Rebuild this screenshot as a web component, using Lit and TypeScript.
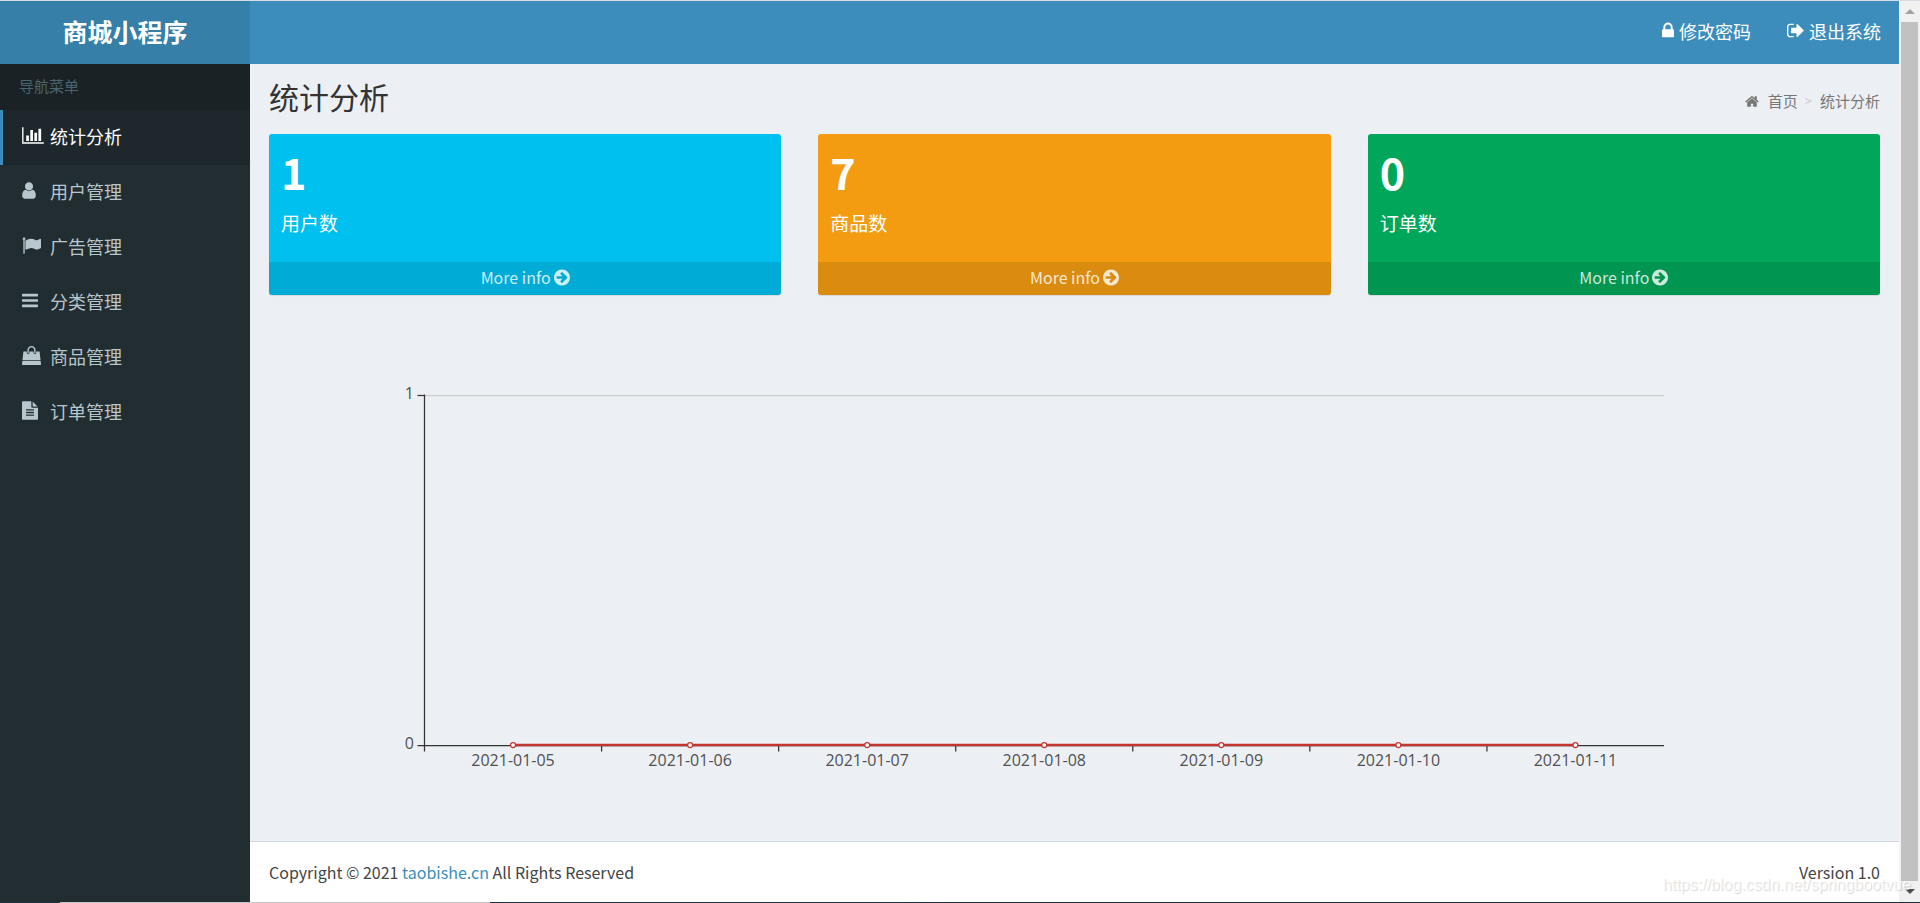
import { LitElement, html, css, svg } from "lit";
import { customElement, property } from "lit/decorators.js";

interface Glyph {
  x: number;
  w: number;
  d: string;
}

const bar = (y: number) =>
  `M1664 ${y}v128q0 26-19 45t-45 19h-1408q-26 0-45-19t-19-45v-128q0-26 19-45t45-19h1408q26 0 45 19t19 45z`;

/* Each glyph sits on a 1792-unit em; x and w give its horizontal extent. */
const GLYPHS: Record<string, Glyph> = {
  chart: {
    x: 0,
    w: 2048,
    d: "M640 896v512h-256v-512h256zm384-512v1024h-256v-1024h256zm1024 1152v128h-2048v-1536h128v1408h1920zm-640-896v768h-256v-768h256zm384-384v1152h-256v-1152h256z",
  },
  user: {
    x: 256,
    w: 1280,
    d: "M1536 1399q0 109-62.5 187t-150.5 78h-854q-88 0-150.5-78t-62.5-187q0-85 8.5-160.5t31.5-152 58.5-131 94-89 134.5-34.5q131 128 313 128t313-128q76 0 134.5 34.5t94 89 58.5 131 31.5 152 8.5 160.5zm-256-887q0 159-112.5 271.5t-271.5 112.5-271.5-112.5-112.5-271.5 112.5-271.5 271.5-112.5 271.5 112.5 112.5 271.5z",
  },
  flag: {
    x: 0,
    w: 1792,
    d: "M320 256q0 72-64 110v1266q0 13-9.5 22.5t-22.5 9.5h-64q-13 0-22.5-9.5t-9.5-22.5v-1266q-64-38-64-110 0-53 37.5-90.5t90.5-37.5 90.5 37.5 37.5 90.5zm1472 64v763q0 25-12.5 38.5t-39.5 27.5q-215 116-369 116-61 0-123.5-22t-108.5-48-115.5-48-142.5-22q-192 0-464 146-17 9-33 9-26 0-45-19t-19-45v-742q0-32 31-55 21-14 79-43 236-120 421-120 107 0 200 29t219 88q38 19 88 19 54 0 117.5-21t110-47 88-47 54.5-21q26 0 45 19t19 45z",
  },
  bars: { x: 128, w: 1536, d: bar(1344) + bar(832) + bar(320) },
  bag: {
    x: 0,
    w: 1792,
    d: "M1757 1408l35 313q3 28-16 50-19 21-48 21h-1664q-29 0-48-21-19-22-16-50l35-313h1722zm-93-839l86 775h-1708l86-775q3-24 21-40.5t43-16.5h256v128q0 53 37.5 90.5t90.5 37.5 90.5-37.5 37.5-90.5v-128h384v128q0 53 37.5 90.5t90.5 37.5 90.5-37.5 37.5-90.5v-128h256q25 0 43 16.5t21 40.5zm-384-185v256q0 26-19 45t-45 19-45-19-19-45v-256q0-106-75-181t-181-75-181 75-75 181v256q0 26-19 45t-45 19-45-19-19-45v-256q0-159 112.5-271.5t271.5-112.5 271.5 112.5 112.5 271.5z",
  },
  file: {
    x: 128,
    w: 1536,
    d: "M1596 476q14 14 28 36h-472v-472q22 14 36 28zm-476 164h544v1056q0 40-28 68t-68 28h-1344q-40 0-68-28t-28-68v-1600q0-40 28-68t68-28h800v544q0 40 28 68t68 28zm160 736v-64q0-14-9-23t-23-9h-704q-14 0-23 9t-9 23v64q0 14 9 23t23 9h704q14 0 23-9t9-23zm0-256v-64q0-14-9-23t-23-9h-704q-14 0-23 9t-9 23v64q0 14 9 23t23 9h704q14 0 23-9t9-23zm0-256v-64q0-14-9-23t-23-9h-704q-14 0-23 9t-9 23v64q0 14 9 23t23 9h704q14 0 23-9t9-23z",
  },
  lock: {
    x: 320,
    w: 1152,
    d: "M640 768h512v-192q0-106-75-181t-181-75-181 75-75 181v192zm832 96v576q0 40-28 68t-68 28h-960q-40 0-68-28t-28-68v-576q0-40 28-68t68-28h32v-192q0-184 132-316t316-132 316 132 132 316v192h32q40 0 68 28t28 68z",
  },
  signout: {
    x: 64,
    w: 1600,
    d: "M704 1440q0 4 1 20t.5 26.5-3 23.5-10 19.5-20.5 6.5h-320q-119 0-203.5-84.5t-84.5-203.5v-704q0-119 84.5-203.5t203.5-84.5h320q13 0 22.5 9.5t9.5 22.5q0 4 1 20t.5 26.5-3 23.5-10 19.5-20.5 6.5h-320q-66 0-113 47t-47 113v704q0 66 47 113t113 47h312l11.5 1 11.5 3 8 5.5 7 9 2 13.5zm928-544q0 26-19 45l-544 544q-19 19-45 19t-45-19-19-45v-288h-448q-26 0-45-19t-19-45v-384q0-26 19-45t45-19h448v-288q0-26 19-45t45-19 45 19l544 544q19 19 19 45z",
  },
  home: {
    x: 64,
    w: 1664,
    d: "M1472 992v480q0 26-19 45t-45 19h-384v-384h-256v384h-384q-26 0-45-19t-19-45v-480q0-1 .5-3t.5-3l575-474 575 474q1 2 1 6zm223-69l-62 74q-8 9-21 11h-3q-13 0-21-7l-692-577-692 577q-12 8-24 7-13-2-21-11l-62-74q-8-10-7-23.5t11-21.5l719-599q32-26 76-26t76 26l244 204v-195q0-14 9-23t23-9h192q14 0 23 9t9 23v408l219 182q10 8 11 21.5t-7 23.5z",
  },
  arrow: {
    x: 128,
    w: 1536,
    d: "M1413 896q0-27-18-45l-362-362-91-91q-18-18-45-18t-45 18l-91 91q-18 18-18 45t18 45l189 189h-502q-26 0-45 19t-19 45v128q0 26 19 45t45 19h502l-189 189q-18 18-18 45t18 45l91 91q18 18 45 18t45-18l91-91 362-362q18-18 18-45zm251 0q0 209-103 385.5t-279.5 279.5-385.5 103-385.5-103-279.5-279.5-103-385.5 103-385.5 279.5-279.5 385.5-103 385.5 103 279.5 279.5 103 385.5z",
  },
};

const icon = (name: string, size = 19) => {
  const g = GLYPHS[name];
  return html`<svg
    class="icon"
    aria-hidden="true"
    width=${Math.round((g.w / 1792) * size)}
    height=${size}
    viewBox="${g.x} 0 ${g.w} 1792"
  >
    <path d=${g.d}></path>
  </svg>`;
};

const MENU = [
  { icon: "chart", label: "统计分析" },
  { icon: "user", label: "用户管理" },
  { icon: "flag", label: "广告管理" },
  { icon: "bars", label: "分类管理" },
  { icon: "bag", label: "商品管理" },
  { icon: "file", label: "订单管理" },
];

const STATS = [
  { value: 1, label: "用户数", tone: "aqua" },
  { value: 7, label: "商品数", tone: "yellow" },
  { value: 0, label: "订单数", tone: "green" },
];

const SERIES = [
  { day: "2021-01-05", value: 0 },
  { day: "2021-01-06", value: 0 },
  { day: "2021-01-07", value: 0 },
  { day: "2021-01-08", value: 0 },
  { day: "2021-01-09", value: 0 },
  { day: "2021-01-10", value: 0 },
  { day: "2021-01-11", value: 0 },
];

@customElement("line-chart")
export class LineChart extends LitElement {
  @property({ attribute: false }) series: { day: string; value: number }[] = [];

  static styles = css`
    :host {
      display: block;
      max-width: 1550px;
    }
    .plot {
      display: block;
      width: 100%;
      height: auto;
    }
    .label {
      font: 16px "Open Sans", "Noto Sans", sans-serif;
      fill: #505050;
    }
    .end {
      text-anchor: end;
    }
    .middle {
      text-anchor: middle;
    }
    .axis {
      stroke: #333;
      stroke-width: 1.25;
    }
    .split {
      stroke: #ccc;
      stroke-width: 1.25;
    }
    .line {
      fill: none;
      stroke: #c23531;
      stroke-width: 2.5;
    }
    .dot {
      fill: #fff;
      stroke: #c23531;
      stroke-width: 1.25;
    }
  `;

  render() {
    const left = 155.5;
    const right = 1395;
    const top = 75.5;
    const bottom = 425.5;
    const step = (right - left) / this.series.length;
    const points = this.series.map((p, i) => ({
      x: left + step * (i + 0.5),
      y: bottom - p.value * (bottom - top),
      day: p.day,
    }));
    return html`<svg class="plot" viewBox="0 0 1550 500" role="img" aria-label="统计分析">
      <line class="split" x1=${left} y1=${top} x2=${right} y2=${top}></line>
      <line class="axis" x1=${left} y1=${top - 1} x2=${left} y2=${bottom + 6}></line>
      <line class="axis" x1=${left - 7} y1=${bottom} x2=${right} y2=${bottom}></line>
      <line class="axis" x1=${left - 7} y1=${top} x2=${left} y2=${top}></line>
      <text class="label end" x="145" y="79">1</text>
      <text class="label end" x="145" y="429">0</text>
      ${points.slice(1).map(
        (_, i) =>
          svg`<line class="axis" x1=${left + step * (i + 1)} y1=${bottom} x2=${left + step * (i + 1)} y2=${bottom + 6}></line>`
      )}
      ${points.map((p) => svg`<text class="label middle" x=${p.x} y="446">${p.day}</text>`)}
      <polyline class="line" points=${points.map((p) => `${p.x},${p.y - 0.5}`).join(" ")}></polyline>
      ${points.map((p) => svg`<circle class="dot" cx=${p.x} cy=${p.y - 0.5} r="2.5"></circle>`)}
    </svg>`;
  }
}

@customElement("app-root")
export class AppRoot extends LitElement {
  static styles = css`
    :host {
      display: grid;
      grid-template-columns: minmax(0, 1fr) 21px;
      grid-template-rows: minmax(0, 1fr) 1px;
      position: relative;
      box-sizing: border-box;
      min-height: 100vh;
      border-top: 1px solid #d9dce2;
      background: #ecf0f5;
      color: #333;
      font: 16px/24px "Noto Sans CJK SC", sans-serif;
    }
    * {
      box-sizing: border-box;
    }
    a {
      color: inherit;
      text-decoration: none;
    }
    h1,
    p,
    ul,
    ol {
      margin: 0;
      padding: 0;
      list-style: none;
    }
    .icon {
      display: block;
      flex: none;
      fill: currentColor;
    }
    .app {
      display: grid;
      grid-template: 63px minmax(0, 1fr) / 250px minmax(0, 1fr);
    }
    .brand {
      display: grid;
      place-items: center;
      padding-bottom: 4px;
      background: #367fa9;
      color: #fff;
      font-size: 25px;
      line-height: 36px;
      font-weight: 700;
    }
    .topbar {
      display: flex;
      align-items: center;
      justify-content: flex-end;
      gap: 36px;
      padding: 0 18px 4px;
      background: #3c8dbc;
      color: #fff;
      font-size: 18px;
    }
    .action {
      display: flex;
      align-items: center;
      gap: 5px;
    }
    .sidebar {
      background: #222d32;
      color: #b8c7ce;
      font-size: 18px;
    }
    .caption {
      padding: 10px 19px 12px;
      background: #1a2226;
      color: #4b646f;
      font-size: 15px;
    }
    .item {
      display: flex;
      align-items: center;
      height: 55px;
      padding: 0 0 4px 19px;
      border-left: 3px solid transparent;
    }
    .item .slot {
      width: 28px;
    }
    .item.active {
      border-color: #3c8dbc;
      background: #1e282c;
      color: #fff;
    }
    .page {
      display: flex;
      flex-direction: column;
      min-width: 0;
    }
    .content {
      flex: 1;
      padding: 12px 19px 20px;
    }
    .heading {
      display: flex;
      justify-content: space-between;
      margin-bottom: 18px;
    }
    .heading h1 {
      font-size: 30px;
      line-height: 40px;
      font-weight: 400;
    }
    .crumbs {
      display: flex;
      align-items: center;
      padding-top: 10px;
      color: #777;
      font-size: 15px;
    }
    .crumbs a {
      display: flex;
      align-items: center;
      gap: 9px;
    }
    .sep {
      padding: 0 8px 0 7px;
      color: #ccc;
      font-size: 13px;
    }
    .stats {
      display: grid;
      grid-template-columns: repeat(3, minmax(0, 1fr));
      gap: 37px;
      margin-bottom: 25px;
    }
    .card {
      border-radius: 3px;
      overflow: hidden;
      color: #fff;
      box-shadow: 0 1px 1px rgba(0, 0, 0, 0.1);
    }
    .aqua {
      background: #00c0ef;
    }
    .yellow {
      background: #f39c12;
    }
    .green {
      background: #00a65a;
    }
    .body {
      height: 128px;
      padding: 10px 12px;
    }
    .value {
      font-size: 43px;
      line-height: 54px;
      font-weight: 700;
    }
    .name {
      padding-top: 11px;
      font-size: 19px;
      line-height: 28px;
    }
    .more {
      display: flex;
      align-items: center;
      justify-content: center;
      gap: 3px;
      height: 33px;
      padding-bottom: 3px;
      background: rgba(0, 0, 0, 0.1);
      color: rgba(255, 255, 255, 0.8);
    }
    .footer {
      display: flex;
      align-items: center;
      justify-content: space-between;
      height: 61px;
      padding: 0 19px;
      border-top: 1px solid #d2d6de;
      background: #fff;
      color: #444;
    }
    .footer a {
      color: #3c8dbc;
    }
    .scroll {
      display: grid;
      grid-template-rows: 21px minmax(0, 1fr) 21px;
      justify-items: center;
      align-items: center;
      background: #f1f1f1;
    }
    .thumb {
      width: 17px;
      height: 100%;
      background: #c1c1c1;
    }
    .edge {
      grid-column: 1 / -1;
      background: linear-gradient(90deg, #1d3540 60px, #c4c6c8 60px 490px, #1d3540 490px 900px, #1b2a4a 950px);
    }
    .up {
      fill: #a3a3a3;
    }
    .down {
      fill: #505050;
    }
    .watermark {
      position: absolute;
      right: 9px;
      bottom: 7px;
      color: rgba(255, 255, 255, 0.75);
      font: 16px/22px "Liberation Sans", sans-serif;
      text-shadow: 1px 1px 1px rgba(0, 0, 0, 0.16);
      pointer-events: none;
    }
  `;

  render() {
    return html`
      <div class="app">
        <a class="brand" href="#">商城小程序</a>
        <header class="topbar">
          <a class="action" href="#">${icon("lock")}修改密码</a>
          <a class="action" href="#">${icon("signout")}退出系统</a>
        </header>
        <nav class="sidebar">
          <p class="caption">导航菜单</p>
          <ul>
            ${MENU.map(
              (m, i) => html`<li>
                <a class="item ${i === 0 ? "active" : ""}" href="#">
                  <span class="slot">${icon(m.icon)}</span>${m.label}
                </a>
              </li>`
            )}
          </ul>
        </nav>
        <div class="page">
          <main class="content">
            <div class="heading">
              <h1>统计分析</h1>
              <ol class="crumbs">
                <li><a href="#">${icon("home", 15)}首页</a></li>
                <li class="sep" aria-hidden="true">&gt;</li>
                <li>统计分析</li>
              </ol>
            </div>
            <section class="stats">
              ${STATS.map(
                (s) => html`<article class="card ${s.tone}">
                  <div class="body">
                    <p class="value">${s.value}</p>
                    <p class="name">${s.label}</p>
                  </div>
                  <a class="more" href="#">More info ${icon("arrow")}</a>
                </article>`
              )}
            </section>
            <line-chart .series=${SERIES}></line-chart>
          </main>
          <footer class="footer">
            <p>Copyright © 2021 <a href="#">taobishe.cn</a> All Rights Reserved</p>
            <p>Version 1.0</p>
          </footer>
        </div>
      </div>
      <div class="scroll" aria-hidden="true">
        <svg class="up" width="10" height="5" viewBox="0 0 10 5"><path d="M0 5L5 0L10 5z"></path></svg>
        <div class="thumb"></div>
        <svg class="down" width="10" height="5" viewBox="0 0 10 5"><path d="M0 0L5 5L10 0z"></path></svg>
      </div>
      <div class="edge"></div>
      <div class="watermark">https://blog.csdn.net/springbootvue</div>
    `;
  }
}
